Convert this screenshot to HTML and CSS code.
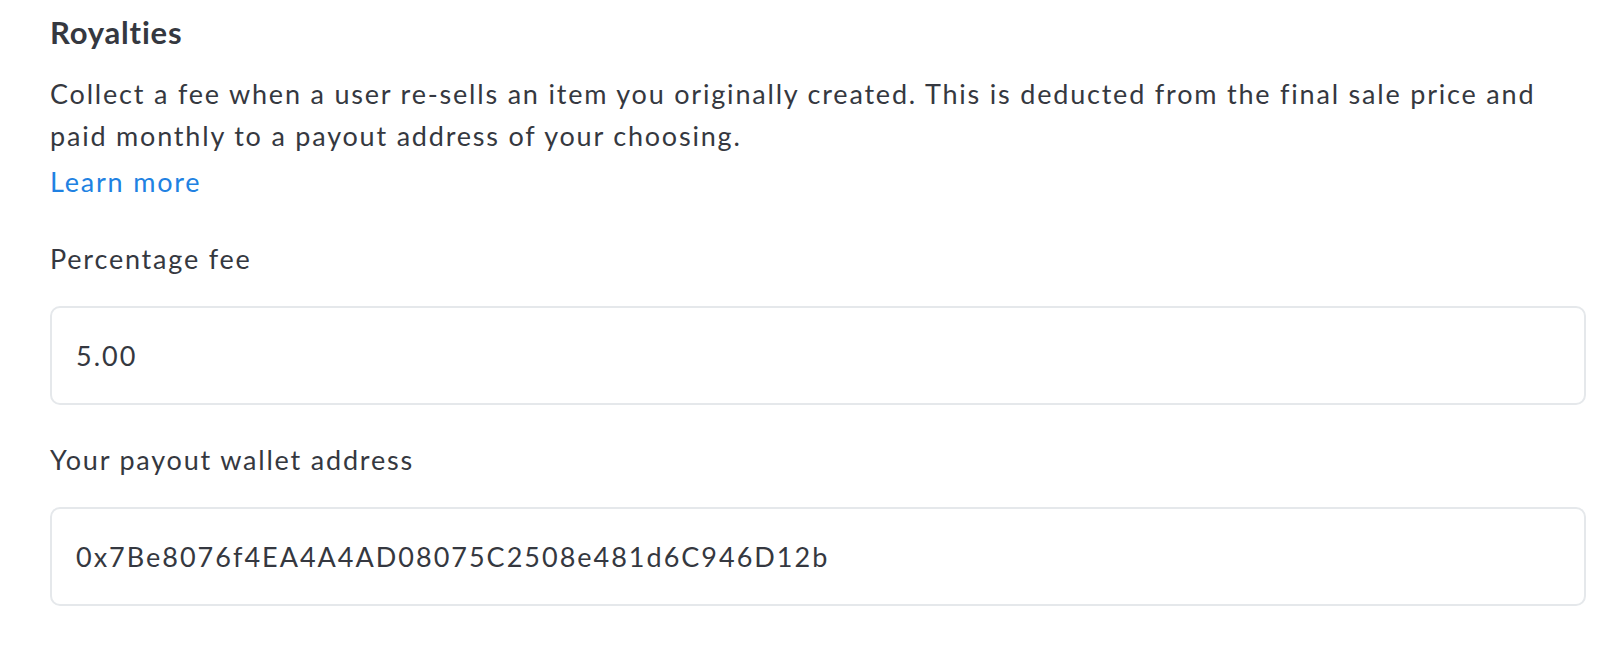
FILE: index.html
```html
<!DOCTYPE html>
<html lang="en">
<head>
<meta charset="utf-8">
<title>Royalties</title>
<link rel="stylesheet" href="styles.css">
</head>
<body>
  <section class="royalties">
    <h3 class="royalties__title">Royalties</h3>
    <p class="royalties__desc">Collect a fee when a user re-sells an item you originally created. This is deducted from the final sale price and paid monthly to a payout address of your choosing.</p>
    <a class="royalties__link" href="#">Learn more</a>
    <div class="field">
      <label class="field__label" for="fee">Percentage fee</label>
      <div class="field__box"><input class="field__input" id="fee" type="text" value="5.00"></div>
    </div>
    <div class="field">
      <label class="field__label" for="wallet">Your payout wallet address</label>
      <div class="field__box"><input class="field__input" id="wallet" type="text" value="0x7Be8076f4EA4A4AD08075C2508e481d6C946D12b"></div>
    </div>
  </section>
</body>
</html>
```
FILE: styles.css
```css
html, body {
  margin: 0;
  padding: 0;
  background: #ffffff;
}
body {
  font-family: "Lato", "Noto Sans", sans-serif;
  color: #353840;
}
.royalties {
  width: 1536px;
  padding: 12px 0 0 50px;
  display: flex;
  flex-direction: column;
  align-items: stretch;
}
.royalties__title {
  margin: 0;
  font-size: 31px;
  line-height: 40px;
  font-weight: 700;
  letter-spacing: 0.8px;
  color: #353840;
}
.royalties__desc {
  margin: 21px 0 0;
  font-size: 27px;
  line-height: 42px;
  letter-spacing: 1.8px;
  width: 1510px;
}
.royalties__link {
  align-self: flex-start;
  margin-top: 4px;
  font-size: 27px;
  line-height: 42px;
  letter-spacing: 1.8px;
  color: #2081e2;
  text-decoration: none;
}
.field {
  display: flex;
  flex-direction: column;
}
.royalties__link + .field { margin-top: 35px; }
.field + .field { margin-top: 34px; }
.field__label {
  font-size: 27px;
  line-height: 42px;
  letter-spacing: 1.8px;
}
.field__box {
  margin-top: 26px;
  height: 99px;
  box-sizing: border-box;
  border: 2px solid #e5e8eb;
  border-radius: 10px;
  display: flex;
  align-items: center;
  padding: 0 24px;
}
.field__input {
  border: 0;
  outline: none;
  padding: 0;
  margin: 0;
  width: 100%;
  font-family: inherit;
  font-size: 27px;
  letter-spacing: 2px;
  color: #353840;
  background: transparent;
}
```
